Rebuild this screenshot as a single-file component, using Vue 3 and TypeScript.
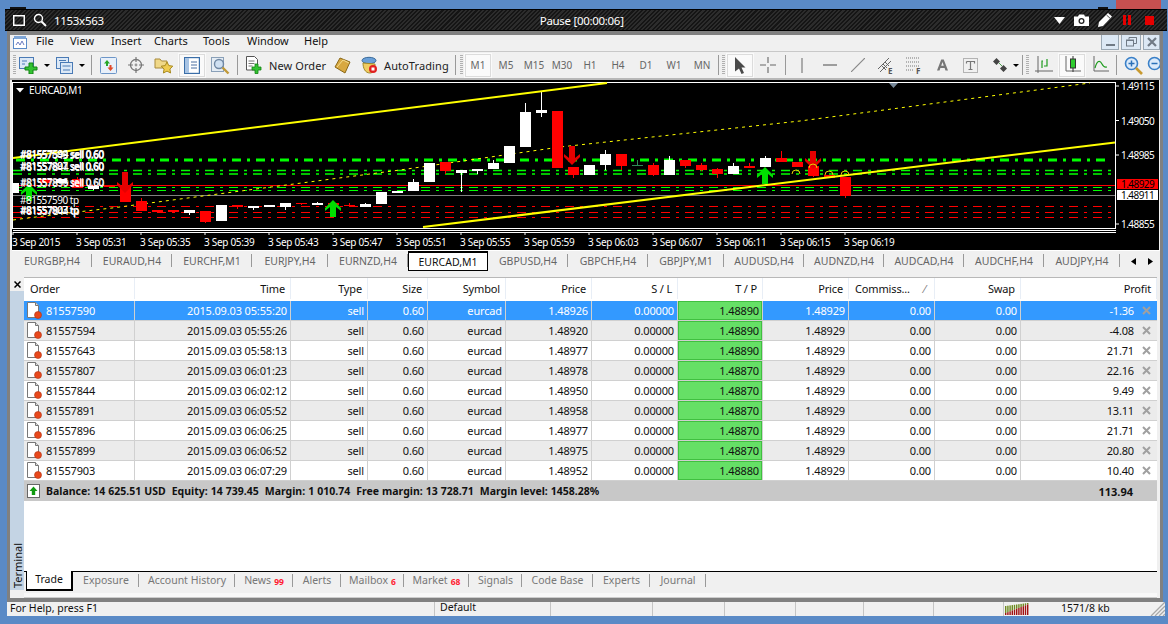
<script setup lang="ts">
interface Row { order: string; time: string; price: string; tp: string; profit: string }
const rows: Row[] = [
  { order: '81557590', time: '2015.09.03 05:55:20', price: '1.48926', tp: '1.48890', profit: '-1.36' },
  { order: '81557594', time: '2015.09.03 05:55:26', price: '1.48920', tp: '1.48890', profit: '-4.08' },
  { order: '81557643', time: '2015.09.03 05:58:13', price: '1.48977', tp: '1.48890', profit: '21.71' },
  { order: '81557807', time: '2015.09.03 06:01:23', price: '1.48978', tp: '1.48870', profit: '22.16' },
  { order: '81557844', time: '2015.09.03 06:02:12', price: '1.48950', tp: '1.48870', profit: '9.49' },
  { order: '81557891', time: '2015.09.03 06:05:52', price: '1.48958', tp: '1.48870', profit: '13.11' },
  { order: '81557896', time: '2015.09.03 06:06:25', price: '1.48977', tp: '1.48870', profit: '21.71' },
  { order: '81557899', time: '2015.09.03 06:06:52', price: '1.48975', tp: '1.48870', profit: '20.80' },
  { order: '81557903', time: '2015.09.03 06:07:29', price: '1.48952', tp: '1.48880', profit: '10.40' },
]
const headers = ['Order', 'Time', 'Type', 'Size', 'Symbol', 'Price', 'S / L', 'T / P', 'Price', 'Commiss...', 'Swap', 'Profit']
const chartTabs = [
  { t: 'EURGBP,H4', w: 80 }, { t: 'EURAUD,H4', w: 80 }, { t: 'EURCHF,M1', w: 80 }, { t: 'EURJPY,H4', w: 76 },
  { t: 'EURNZD,H4', w: 80 }, { t: 'EURCAD,M1', w: 80, active: true }, { t: 'GBPUSD,H4', w: 80 }, { t: 'GBPCHF,H4', w: 80 },
  { t: 'GBPJPY,M1', w: 76 }, { t: 'AUDUSD,H4', w: 80 }, { t: 'AUDNZD,H4', w: 80 }, { t: 'AUDCAD,H4', w: 80 },
  { t: 'AUDCHF,H4', w: 80 }, { t: 'AUDJPY,H4', w: 76 },
]
const termTabs = [
  { t: 'Exposure', w: 66 }, { t: 'Account History', w: 96 }, { t: 'News', n: '99', w: 58 }, { t: 'Alerts', w: 48 },
  { t: 'Mailbox', n: '6', w: 63 }, { t: 'Market', n: '68', w: 65 }, { t: 'Signals', w: 53 }, { t: 'Code Base', w: 71 },
  { t: 'Experts', w: 57 }, { t: 'Journal', w: 56 },
]
const menu = [
  { t: 'File', w: 34 }, { t: 'View', w: 41 }, { t: 'Insert', w: 43 }, { t: 'Charts', w: 49 },
  { t: 'Tools', w: 44 }, { t: 'Window', w: 57 }, { t: 'Help', w: 30 },
]
const periods = ['M1', 'M5', 'M15', 'M30', 'H1', 'H4', 'D1', 'W1', 'MN']
const statusCells = [102, 72, 71, 68, 70, 70]

const W = '#ffffff'
const R = '#ff0000'
// index, body top, body bottom, wick top, wick bottom, colour
const raw: [number, number, number, number, number, string][] = [
  [0, 183, 193, 183, 193, W], [2, 179, 183, 179, 183, R], [3, 179, 183, 179, 183, W], [4, 179, 188, 177, 188, R],
  [5, 186, 189, 186, 190, W], [6, 185, 187, 185, 187, R], [7, 186, 202, 186, 202, R], [8, 201, 211, 198, 211, R],
  [9, 210, 212, 210, 213, R], [10, 210, 212, 210, 213, R], [11, 210, 213, 210, 215, W], [12, 211, 222, 211, 223, R],
  [13, 205, 221, 205, 221, W], [14, 205, 207, 205, 209, R], [15, 206, 208, 206, 210, W], [16, 205, 207, 205, 207, W],
  [17, 203, 207, 203, 210, W], [18, 203, 204, 203, 205, R], [19, 203, 205, 202, 205, W], [20, 203, 205, 203, 205, R],
  [21, 205, 206, 203, 207, R], [22, 204, 207, 203, 207, W], [23, 192, 204, 192, 204, W], [24, 191, 193, 191, 193, W],
  [25, 182, 191, 179, 191, W], [26, 163, 182, 163, 182, W], [27, 162, 171, 162, 174, R], [28, 170, 173, 170, 192, W],
  [29, 169, 171, 169, 174, W], [30, 163, 169, 160, 169, W], [31, 146, 163, 146, 163, W], [32, 112, 147, 103, 147, W],
  [33, 110, 113, 92, 117, W], [34, 111, 168, 111, 168, R], [35, 167, 175, 167, 178, R], [36, 165, 175, 165, 175, W],
  [37, 154, 165, 150, 170, W], [38, 154, 166, 154, 170, R], [39, 165, 166, 160, 166, '#2e8b57'], [40, 165, 175, 163, 176, R],
  [41, 160, 175, 156, 175, W], [42, 160, 166, 160, 168, R], [43, 165, 170, 163, 171, R], [44, 169, 174, 168, 178, R],
  [45, 166, 174, 163, 174, W], [46, 166, 168, 163, 168, R], [47, 158, 167, 156, 167, W], [48, 158, 162, 151, 162, R],
  [49, 162, 167, 162, 167, R], [50, 166, 176, 151, 177, R], [51, 175, 178, 175, 178, R], [52, 177, 196, 177, 198, R],
]
const candles = raw.map(([i, top, bot, wt, wb, c]) => {
  const x = 13.5 + 16 * i
  const x1 = Math.max(13, x - 5.5)
  return { x, x1, w: x + 5.5 - x1, top, h: bot - top, wt, wb, c }
})
const arrowPts = (cx: number, y: number, h: number, up: boolean): string => {
  const p: [number, number][] = [[0, 0], [8, 8], [8, 11], [3, 7], [3, h], [-3, h], [-3, 7], [-8, 11], [-8, 8]]
  return p.map(([dx, dy]) => `${cx + dx},${up ? y + dy : y + h - dy}`).join(' ')
}
const upArrows = [{ x: 29, y: 184 }, { x: 333, y: 200 }, { x: 765, y: 167 }].map(a => arrowPts(a.x, a.y, 17, true))
const downArrows = [{ x: 125, y: 172, h: 21 }, { x: 572, y: 146, h: 19 }, { x: 813, y: 151, h: 18 }].map(a => arrowPts(a.x, a.y, a.h, false))
const stops = [{ x: 796, y: 170 }, { x: 813, y: 164 }, { x: 829, y: 171 }, { x: 845, y: 171 }]
const thin = [170.5, 174, 187.5, 190.5]
const redLines = [206.5, 212.5, 217.5]
const ticks = Array.from({ length: 14 }, (_, k) => 13 + 64 * k)
const timeLabels = ['3 Sep 2015', '3 Sep 05:31', '3 Sep 05:35', '3 Sep 05:39', '3 Sep 05:43', '3 Sep 05:47', '3 Sep 05:51', '3 Sep 05:55', '3 Sep 05:59', '3 Sep 06:03', '3 Sep 06:07', '3 Sep 06:11', '3 Sep 06:15', '3 Sep 06:19']
const prices = [{ t: '1.49115', y: 90 }, { t: '1.49050', y: 124.5 }, { t: '1.48985', y: 159 }, { t: '1.48855', y: 228 }]
const orderLabels = [
  { t: '#81557590 sell 0.60', x: 20, y: 158 }, { t: '#81557594 sell 0.60', x: 20.6, y: 157.5 }, { t: '#81557643 sell 0.60', x: 20, y: 159 },
  { t: '#81557807 sell 0.60', x: 20, y: 170 }, { t: '#81557844 sell 0.60', x: 20.6, y: 171 }, { t: '#81557891 sell 0.60', x: 20, y: 169.5 },
  { t: '#81557896 sell 0.60', x: 20, y: 186 }, { t: '#81557899 sell 0.60', x: 20.5, y: 187 },
  { t: '#81557590 tp', x: 20, y: 204 }, { t: '#81557807 tp', x: 20, y: 214 }, { t: '#81557844 tp', x: 20.6, y: 215 }, { t: '#81557903 tp', x: 20, y: 213.5 },
]
const meter = Array.from({ length: 11 }, (_, k) => ({ x: k * 2.2, top: 1 + (10 - k) * 0.3, mid: 11 - k * 0.85 }))
</script>

<template>
  <div class="page">
    <div class="topstrip">
      <i class="nub nub-l"></i>
      <i class="nub nub-r"></i>
      <i class="closebtn"></i>
    </div>

    <div class="rec">
      <svg class="rec-win" width="12" height="11" viewBox="0 0 12 11"><rect x="0.75" y="0.75" width="10.5" height="9.5" fill="none" stroke="#fff" stroke-width="1.5" /></svg>
      <svg class="rec-mag" width="14" height="14" viewBox="0 0 14 14"><circle cx="5.5" cy="5.5" r="4" fill="none" stroke="#fff" stroke-width="1.4" /><path d="M8.5 8.5l4.5 4.5" stroke="#fff" stroke-width="2" /></svg>
      <span class="rec-size">1153x563</span>
      <span class="rec-title">Pause [00:00:06]</span>
      <div class="rec-tools">
        <svg width="11" height="7" viewBox="0 0 11 7"><path d="M0 0h11L5.5 7z" fill="#fff" /></svg>
        <svg width="15" height="12" viewBox="0 0 15 12"><path d="M0 2.5h4L5 .5h5l1 2h4V12H0z" fill="#fff" /><circle cx="7.5" cy="7" r="3" fill="#222" /><circle cx="7.5" cy="7" r="1.7" fill="#fff" /></svg>
        <svg width="14" height="14" viewBox="0 0 14 14"><path d="M10 0l4 3.5L5 13l-5 1 1-5z" fill="#fff" /><path d="M8.5 2l3.5 3.2" stroke="#222" stroke-width=".8" /></svg>
        <svg class="t-pause" width="8" height="10" viewBox="0 0 8 10"><path d="M0 0h3v10H0zM5 0h3v10H5z" fill="#e60000" /></svg>
        <svg class="t-stop" width="9" height="9" viewBox="0 0 9 9"><rect width="9" height="9" fill="#e60000" /></svg>
      </div>
    </div>

    <div class="frame">
      <div class="menubar">
        <svg class="appicon" width="15" height="14" viewBox="0 0 15 14"><rect x=".5" y="2.5" width="13" height="10" fill="#fff" stroke="#5a8ac6" /><rect x="1" y="0" width="12" height="3" fill="#7fa6d6" /><path d="M3 9l2-3 2 3 2-4 2 4" fill="none" stroke="#6a7bc0" /></svg>
        <span v-for="m in menu" :key="m.t" class="menuitem" :style="{ width: m.w + 'px' }">{{ m.t }}</span>
        <div class="winbtns">
          <span class="wb wb1"><svg width="9" height="9" viewBox="0 0 9 9"><rect y="6" width="9" height="2" fill="#707a85" /></svg></span>
          <span class="wb wb2"><svg width="11" height="10" viewBox="0 0 11 10"><path d="M3 2.5V.5h7.5v6H8" fill="none" stroke="#707a85" /><rect x=".5" y="3" width="7" height="6" fill="none" stroke="#707a85" /><path d="M3 .5h7.5M.5 3.5h7" stroke="#707a85" /></svg></span>
          <span class="wb wb3"><svg width="10" height="10" viewBox="0 0 10 10"><path d="M1 1l8 8M9 1l-8 8" stroke="#707a85" stroke-width="2.2" /></svg></span>
        </div>
      </div>

      <div class="toolbar">
        <i class="grip g-first"></i>
        <div class="tb dd1">
          <svg width="20" height="17" viewBox="0 0 20 17"><rect x=".5" y=".5" width="14" height="11" fill="#dbe8f6" stroke="#4a7ab5" /><path d="M3 4h5M3 7h3" stroke="#4a7ab5" /><path d="M10 6h4v4h4v3h-4v4h-4v-4H6v-3h4z" fill="#32c232" stroke="#128412" /></svg>
          <i class="caret"></i>
        </div>
        <div class="tb dd2">
          <svg width="17" height="17" viewBox="0 0 17 17"><rect x=".5" y=".5" width="12" height="11" fill="#dbe8f6" stroke="#4a7ab5" /><rect x="4.5" y="5.5" width="12" height="11" fill="#dbe8f6" stroke="#4a7ab5" /><path d="M6.5 9h8M7 13h7M3 3.5h7" stroke="#4a7ab5" /></svg>
          <i class="caret"></i>
        </div>
        <i class="sep s6"></i>
        <div class="tb b28"><svg width="17" height="17" viewBox="0 0 17 17"><rect x=".5" y=".5" width="16" height="16" rx="1" fill="#e8f0fa" stroke="#6d96c8" /><path d="M7 3l3 3.5H8V9H6V6.5H4z" fill="#26a626" /><path d="M10.5 14l-3-3.5h2V8h2v2.5h2z" fill="#e04a2a" /></svg></div>
        <div class="tb b28"><svg width="18" height="18" viewBox="0 0 18 18"><circle cx="9" cy="9" r="5.5" fill="none" stroke="#777" stroke-width="1.3" /><circle cx="9" cy="9" r="1.4" fill="#999" /><path d="M9 1v5M9 12v5M1 9h5M12 9h5" stroke="#777" stroke-width="1.2" /></svg></div>
        <div class="tb b28"><svg width="20" height="18" viewBox="0 0 20 18"><path d="M1 3h5l1.5 2H13v7H1z" fill="#f0d888" stroke="#a88a3a" /><path d="M13 6l1.8 3.6 4 .6-2.9 2.8.7 4-3.6-1.9-3.6 1.9.7-4-2.9-2.8 4-.6z" fill="#f0cc50" stroke="#a88a20" /></svg></div>
        <div class="tb b28 on"><svg width="16" height="17" viewBox="0 0 16 17"><rect x=".5" y=".5" width="15" height="16" fill="#fff" stroke="#3a6ea8" stroke-width="1.4" /><rect x="1" y="1" width="4" height="15" fill="#a8c4e4" /><path d="M7 5h6M7 8h6M7 11h6" stroke="#4a6ea0" /></svg></div>
        <div class="tb b28"><svg width="19" height="19" viewBox="0 0 19 19"><rect x=".5" y="1.5" width="12" height="14" fill="#e4ecf4" stroke="#8aa0b8" /><circle cx="8" cy="8" r="4.5" fill="#cfe0f2" stroke="#7088a4" stroke-width="1.4" /><path d="M11.5 11.5l6 6" stroke="#c09a3a" stroke-width="2.4" /></svg></div>
        <i class="sep s6"></i>
        <div class="tb txt orderbtn">
          <svg width="17" height="18" viewBox="0 0 17 18"><path d="M.5.5h8l3 3V14H.5z" fill="#fff" stroke="#555" /><path d="M2.5 5h6M2.5 7.5h6M2.5 10h4" stroke="#777" /><path d="M9 8h3v3h3v3h-3v3.500H9V14H6v-3h3z" fill="#32c232" stroke="#128412" stroke-width=".8" /></svg>
          <span>New Order</span>
        </div>
        <div class="tb b28"><svg width="17" height="17" viewBox="0 0 17 17"><path d="M6 1l10 4-5 11L1 10z" fill="#d8a840" stroke="#8a6818" /><path d="M3 10l6-7 6 3" fill="none" stroke="#f4dc90" /></svg></div>
        <div class="tb txt autobtn">
          <svg width="17" height="18" viewBox="0 0 17 18"><ellipse cx="8" cy="4.500" rx="7" ry="3.200" fill="#6aa0d8" stroke="#3a6a9a" /><path d="M2 7c0 5 2 10 7 10 3 0 5-3 5-9z" fill="#f0cc60" stroke="#a08828" /><circle cx="12" cy="13" r="4" fill="#e02020" /><rect x="10.500" y="11.500" width="3" height="3" fill="#fff" /></svg>
          <span>AutoTrading</span>
        </div>
        <i class="sep s6"></i>
        <i class="grip g8"></i>
        <div v-for="(p, i) in periods" :key="p" class="tb b28 period" :class="{ on: i === 0 }">{{ p }}</div>
        <i class="sep s4"></i>
        <i class="grip g6"></i>
        <div class="tb b28 on"><svg width="11" height="17" viewBox="0 0 11 17"><path d="M0 0l10.500 10.500H6.500l2.500 5.500-2.500 1-2.500-5.500L0 14.500z" fill="#4a4a4a" /></svg></div>
        <div class="tb b28"><svg width="16" height="16" viewBox="0 0 16 16"><path d="M8 0v6M8 10v6M0 8h6M10 8h6" stroke="#666" stroke-width="1.100" /></svg></div>
        <i class="sep s6"></i>
        <div class="tb b28"><svg width="2" height="15" viewBox="0 0 2 15"><path d="M1 0v15" stroke="#666" stroke-width="1" /></svg></div>
        <div class="tb b28"><svg width="14" height="2" viewBox="0 0 14 2"><path d="M0 1h14" stroke="#666" stroke-width="1.200" /></svg></div>
        <div class="tb b28"><svg width="14" height="14" viewBox="0 0 14 14"><path d="M0 14L14 0" stroke="#888" stroke-width="1.200" /></svg></div>
        <div class="tb b28"><svg width="17" height="17" viewBox="0 0 17 17"><path d="M0 12L11 1M2 15L13 4M5 7l4 4M7 5l4 4M4 9l4 4" stroke="#666" fill="none" /><text x="10" y="16.500" class="mini">E</text></svg></div>
        <div class="tb b28"><svg width="17" height="17" viewBox="0 0 17 17"><path d="M0 1h14M0 5h14M0 9h14M0 13h8" stroke="#777" stroke-dasharray="1 1" /><text x="10" y="16.500" class="mini">F</text></svg></div>
        <div class="tb b28"><svg width="11" height="12" viewBox="0 0 13 13"><path d="M5 0h3l5 13h-3l-1-3H4l-1 3H0zM6.500 3L5 7.500h3z" fill="#777" fill-rule="evenodd" /></svg></div>
        <div class="tb b28"><svg width="15" height="15" viewBox="0 0 15 15"><rect x=".5" y=".5" width="14" height="14" fill="none" stroke="#777" stroke-dasharray="1 1" /><path d="M3.500 3.500h8v2M7.500 3.500v8M5.500 11.500h4M3.500 3.500v2" fill="none" stroke="#777" stroke-width="1.200" /></svg></div>
        <div class="tb dd3">
          <svg width="15" height="14" viewBox="0 0 15 14"><path d="M0 3.500l3.500-3.500 3.500 3.500-3.500 3.500zM7 10.500L10.500 7l3.500 3.500L10.500 14z" fill="#444" /><path d="M6 5l3 3" stroke="#4aa04a" /></svg>
          <i class="caret"></i>
        </div>
        <i class="sep s4"></i>
        <i class="grip g6"></i>
        <div class="tb b28"><svg width="18" height="18" viewBox="0 0 18 18"><path d="M3 0v15h15" fill="none" stroke="#666" /><path d="M0 15h3M3 17v-2" stroke="#666" /><path d="M7 12V5h1M12 3v7h-2M9 10h3" fill="none" stroke="#1f9c1f" stroke-width="1.200" /></svg></div>
        <div class="tb b28 on"><svg width="18" height="20" viewBox="0 0 18 20"><path d="M3 1v15h15" fill="none" stroke="#666" /><path d="M10 1v16" stroke="#333" /><rect x="7.500" y="4" width="5" height="9" fill="#2ecc2e" stroke="#333" /></svg></div>
        <div class="tb b28"><svg width="18" height="18" viewBox="0 0 18 18"><path d="M3 0v15h15" fill="none" stroke="#666" /><path d="M4 12c2-8 5-8 7-4s3 3 5 3" fill="none" stroke="#1f9c1f" stroke-width="1.200" /></svg></div>
        <i class="sep s5"></i>
        <div class="tb b28"><svg width="19" height="19" viewBox="0 0 19 19"><circle cx="7.500" cy="7.500" r="6" fill="#dbeafa" stroke="#3a80c8" stroke-width="1.600" /><path d="M4.500 7.500h6M7.500 4.500v6" stroke="#2a70b8" stroke-width="1.500" /><path d="M12 12l6 6" stroke="#c89a30" stroke-width="2.600" /></svg></div>
        <div class="tb b14"><svg width="14" height="19" viewBox="0 0 14 19"><circle cx="7.500" cy="7.500" r="6" fill="#dbeafa" stroke="#3a80c8" stroke-width="1.600" /><path d="M4.500 7.500h6" stroke="#2a70b8" stroke-width="1.500" /></svg></div>
      </div>

      <div class="chart">
        <svg class="chartsvg" width="1147" height="170" viewBox="12 80 1147 170">
          <rect x="12" y="80" width="1147" height="170" fill="#000" />
          <rect x="12.500" y="82.500" width="1103" height="146" fill="none" stroke="#fff" />
          <path d="M13 230.500H1116M13 232.500H1116" stroke="#fff" />
          <path d="M889 83h9l-4.500 5z" fill="#778899" />
          <path d="M16 88h8l-4 4.500z" fill="#fff" />
          <text x="29" y="94" class="ct">EURCAD,M1</text>

          <path d="M13 160H1111" stroke="#00ff00" stroke-width="3" stroke-dasharray="9 6 3 6" stroke-dashoffset="-3" fill="none" />
          <path v-for="y in thin" :key="y" :d="`M13 ${y}H1111`" stroke="#00ff00" stroke-dasharray="9 6 3 6" fill="none" :stroke-width="y < 180 ? 1.500 : 1" />
          <path d="M13 185.500H1115" stroke="#ff0000" fill="none" />
          <path d="M13 195.500H1115" stroke="#808080" fill="none" />
          <path v-for="y in redLines" :key="y" :d="`M13 ${y}H1111`" stroke="#ff0000" stroke-dasharray="9 6 3 6" fill="none" />

          <path d="M13 220L20 219L60 214L112 208L400 170L560 147L800 121L1090 83" fill="none" stroke="#ffff00" stroke-dasharray="3 4" />

          <g v-for="(c, i) in candles" :key="i">
            <path :d="`M${c.x} ${c.wt}V${c.wb}`" :stroke="c.c" fill="none" />
            <rect :x="c.x1" :y="c.top" :width="c.w" :height="c.h" :fill="c.c" />
          </g>

          <path d="M13 158L607 83" fill="none" stroke="#ffff00" stroke-width="2" />
          <path d="M423 227L1115 142.500" fill="none" stroke="#ffff00" stroke-width="2" />

          <polygon v-for="(p, i) in upArrows" :key="'u' + i" :points="p" fill="#00e000" />
          <polygon v-for="(p, i) in downArrows" :key="'d' + i" :points="p" fill="#e60000" />
          <path v-for="(s, i) in stops" :key="'s' + i" :d="`M${s.x - 4} ${s.y + 4}a4 4 0 1 1 8 0`" fill="none" stroke="#e6d000" />

          <text v-for="(l, i) in orderLabels" :key="'l' + i" :x="l.x" :y="l.y" class="lab">{{ l.t }}</text>

          <path v-for="t in ticks" :key="t" :d="`M${t} 232V235`" stroke="#fff" />
          <text v-for="(t, i) in timeLabels" :key="t" :x="12 + 64 * i" y="246" class="ct">{{ t }}</text>

          <path d="M1115.500 82V229" stroke="#fff" />
          <path d="M1116 86h3M1116 120.500h3M1116 155h3M1116 224h3" stroke="#fff" />
          <text v-for="p in prices" :key="p.t" x="1121" :y="p.y" class="ct px">{{ p.t }}</text>
          <rect x="1117" y="179" width="41" height="10" fill="#ff0000" />
          <text x="1121" y="188" class="ct px dark">1.48929</text>
          <rect x="1117" y="190" width="41" height="10" fill="#fff" />
          <text x="1121" y="199" class="ct px dark">1.48911</text>
        </svg>
      </div>

      <div class="charttabs">
        <div v-for="t in chartTabs" :key="t.t" class="ctab" :class="{ active: t.active }" :style="{ width: t.w + 'px' }">{{ t.t }}</div>
        <div class="tabarrows">
          <svg width="5" height="7" viewBox="0 0 5 7"><path d="M5 0v7L0 3.500z" fill="#000" /></svg>
          <svg width="5" height="7" viewBox="0 0 5 7"><path d="M0 0v7l5-3.500z" fill="#000" /></svg>
        </div>
      </div>

      <div class="terminal">
        <div class="strip">
          <div class="stripx"><svg width="7" height="7" viewBox="0 0 7 7"><path d="M.5.500l6 6M6.500.500l-6 6" stroke="#000" stroke-width="1.500" /></svg></div>
          <div class="stripbody"><span>Terminal</span></div>
        </div>
        <div class="termmain">
          <div class="grid">
            <div class="tr head">
              <div v-for="(h, i) in headers" :key="i" class="td" :class="{ left: i === 0 || i === 9 }">
                {{ h }}<span v-if="i === 9" class="sort">⁄</span>
              </div>
            </div>
            <div v-for="(r, i) in rows" :key="r.order" class="tr" :class="{ sel: i === 0, alt: i % 2 === 1 }">
              <div class="td left ordercell">
                <svg width="16" height="17" viewBox="0 0 16 17"><path d="M1.500.500h8l3 3V15.500h-11z" fill="#fff" stroke="#777" /><path d="M9.500.500v3h3" fill="#ddd" stroke="#777" /><circle cx="12" cy="13" r="3.500" fill="#e8481c" stroke="#b03010" stroke-width=".6" /></svg>
                <span>{{ r.order }}</span>
              </div>
              <div class="td">{{ r.time }}</div>
              <div class="td">sell</div>
              <div class="td">0.60</div>
              <div class="td">eurcad</div>
              <div class="td">{{ r.price }}</div>
              <div class="td">0.00000</div>
              <div class="td tp">{{ r.tp }}</div>
              <div class="td">1.48929</div>
              <div class="td">0.00</div>
              <div class="td">0.00</div>
              <div class="td profit">
                <span>{{ r.profit }}</span>
                <svg width="9" height="9" viewBox="0 0 9 9"><path d="M1 1l7 7M8 1l-7 7" stroke="#a0a0a0" stroke-width="2" /></svg>
              </div>
            </div>
            <div class="balance">
              <svg width="14" height="15" viewBox="0 0 14 15"><rect x=".5" y=".5" width="12" height="13" fill="#fff" stroke="#666" /><path d="M6.500 2.500l4 4.500H8.200v4H4.800V7H2.500z" fill="#109a10" /></svg>
              <span class="baltext">Balance: 14 625.51 USD&nbsp; Equity: 14 739.45&nbsp; Margin: 1 010.74&nbsp; Free margin: 13 728.71&nbsp; Margin level: 1458.28%</span>
              <span class="baltotal">113.94</span>
            </div>
          </div>
          <div class="termtabs">
            <div class="ttab active">Trade</div>
            <div v-for="t in termTabs" :key="t.t" class="ttab" :style="{ width: t.w + 'px' }">
              {{ t.t }}<b v-if="t.n">{{ t.n }}</b>
            </div>
          </div>
        </div>
      </div>
    </div>

    <div class="status">
      <span class="st-help">For Help, press F1</span>
      <span class="st-cell st-default">Default</span>
      <span v-for="(w, i) in statusCells" :key="i" class="st-cell" :style="{ width: w + 'px' }"></span>
      <span class="st-cell st-meter">
        <svg width="24" height="13" viewBox="0 0 24 13">
          <g v-for="(m, i) in meter" :key="i">
            <rect :x="m.x" :y="m.top" width="1.400" :height="m.mid - m.top" fill="#6d8b1e" />
            <rect :x="m.x" :y="m.mid" width="1.400" :height="13 - m.mid" fill="#a01010" />
          </g>
        </svg>
      </span>
      <span class="st-kb">1571/8 kb</span>
      <svg class="st-grip" width="16" height="14" viewBox="0 0 16 14"><path d="M2 14L16 0M6 14L16 4M10 14l6-6M14 14l2-2" stroke="#a8a8a8" stroke-width="1.300" /></svg>
    </div>
  </div>
</template>

<style>
html, body { margin: 0; padding: 0; }
</style>

<style scoped>
.page { width: 1168px; height: 624px; overflow: hidden; background: #5a8ac6; display: flex; flex-direction: column; font: 11px "Noto Sans", Tahoma, sans-serif; color: #111; }
.topstrip { height: 9px; display: flex; align-items: flex-end; flex: none; }
.nub { display: block; height: 2px; background: #111; }
.nub-l { width: 16px; margin-left: 10px; }
.nub-r { width: 10px; margin-left: 1072px; }
.closebtn { display: block; width: 45px; height: 9px; margin-left: 8px; background: #c75050; }
.rec { flex: none; height: 22px; margin: 0 1px 0 5px; background: repeating-linear-gradient(135deg, #151515 0, #151515 1.500px, #2c2c2c 1.500px, #2c2c2c 3px); border: 1px solid #000; border-width: 1px 0; box-sizing: border-box; display: flex; align-items: center; color: #fff; font-size: 11.500px; letter-spacing: -.3px; }
.rec-win { margin-left: 8px; }
.rec-mag { margin-left: 8px; }
.rec-size { margin-left: 7px; }
.rec-title { margin-left: 436px; }
.rec-tools { margin-left: auto; display: flex; align-items: center; gap: 9px; padding-right: 13px; }
.t-pause { margin-left: 2px; }
.t-stop { margin-left: 5px; }

.frame { flex: none; width: 1156px; height: 571px; margin-left: 7px; border: 3px solid #808080; border-top-width: 4px; border-bottom-width: 4px; box-sizing: border-box; background: #f0f0f0; display: flex; flex-direction: column; overflow: hidden; }
.menubar { flex: none; height: 17px; display: flex; align-items: center; border-bottom: 1px solid #c8c8c8; box-sizing: border-box; padding-left: 3px; }
.appicon { margin-right: 8px; }
.menuitem { flex: none; line-height: 14px; margin-bottom: 5px; }
.winbtns { margin-left: auto; display: flex; gap: 2px; align-self: flex-start; }
.wb { box-sizing: border-box; height: 15px; background: #dce8f4; border: 1px solid #9aa8b4; border-top: 0; display: flex; align-items: center; justify-content: center; }
.wb1 { width: 18px; } .wb2 { width: 20px; } .wb3 { width: 17px; }

.toolbar { flex: none; height: 26px; display: flex; align-items: center; border-bottom: 2px solid #b8b8b8; overflow: hidden; }
.tb { flex: none; height: 25px; display: flex; align-items: center; justify-content: center; box-sizing: border-box; }
.b28 { width: 28px; }
.b14 { width: 14px; justify-content: flex-start; }
.on { background: #fafafa; outline: 1px solid #dcdcdc; outline-offset: -2px; }
.dd1 { width: 37px; justify-content: flex-start; padding-left: 1px; gap: 5px; }
.dd2 { width: 33px; justify-content: flex-start; padding-left: 1px; gap: 6px; }
.dd3 { width: 36px; justify-content: flex-start; padding-left: 9px; gap: 5px; }
.caret { display: block; width: 0; height: 0; border: 3px solid transparent; border-top: 3px solid #000; border-bottom: 0; }
.sep { flex: none; display: block; height: 20px; background: linear-gradient(#999, #999) center / 1px 100% no-repeat; }
.s4 { width: 4px; } .s5 { width: 5px; } .s6 { width: 6px; }
.grip { flex: none; display: block; height: 20px; background: repeating-linear-gradient(#b0b0b0 0, #b0b0b0 1px, transparent 1px, transparent 2px) center / 3px 100% no-repeat; }
.g-first { width: 8px; }
.g8 { width: 6px; } .g6 { width: 6px; }
.txt { justify-content: flex-start; gap: 6px; font-size: 11px; letter-spacing: .1px; color: #222; }
.orderbtn { width: 88px; padding-left: 6px; }
.autobtn { width: 96px; padding-left: 5px; }
.period { color: #666; font-size: 10px; }
.mini { font: bold 8px "Noto Sans", sans-serif; fill: #555; }

.chart { flex: none; height: 170px; margin-left: 2px; border-bottom: 1px solid #fff; }
.chartsvg { display: block; }
.ct { font: 10px "Noto Sans", sans-serif; fill: #fff; letter-spacing: -.3px; }
.px { letter-spacing: -.55px; }
.dark { fill: #000; }
.lab { font: 10px "Noto Sans", sans-serif; fill: #fff; letter-spacing: -.5px; }

.charttabs { flex: none; height: 20px; margin-left: 2px; display: flex; align-items: stretch; }
.ctab { flex: none; box-sizing: border-box; display: flex; align-items: center; justify-content: center; font-size: 10.500px; color: #666; background: linear-gradient(#999, #999) right 3px / 1px 13px no-repeat; }
.ctab.active { background: #fff; color: #111; border: 1px solid #000; border-top: 2px solid #000; }
.tabarrows { flex: 1; display: flex; align-items: center; justify-content: flex-start; gap: 12px; padding-left: 11px; }

.terminal { flex: 1; min-height: 0; display: flex; padding-top: 6px; }
.strip { flex: none; width: 14px; display: flex; flex-direction: column; margin-bottom: 8px; }
.stripx { flex: none; height: 14px; display: flex; align-items: center; justify-content: center; }
.stripbody { flex: 1; background: #c4d4e4; display: flex; align-items: flex-end; justify-content: center; padding-bottom: 2px; }
.stripbody span { writing-mode: vertical-rl; transform: rotate(180deg); line-height: 13px; font-size: 11px; color: #111; }
.termmain { flex: 1; min-width: 0; display: flex; flex-direction: column; margin-right: 3px; }
.grid { flex: 1; background: #fff; }
.tr { display: grid; grid-template-columns: 111px 156px 77px 60px 78px 86px 86px 85px 86px 86px 86px 136px; height: 20px; border-bottom: 1px solid #d0d0d0; box-sizing: border-box; color: #111; }
.tr.head { height: 24px; border-bottom: 0; border-top: 1px solid #b8b8b8; background: #fff; padding-bottom: 2px; }
.head .td { border-right: 1px solid #e8eef6; padding-right: 5px; }
.td { display: flex; align-items: center; justify-content: flex-end; box-sizing: border-box; border-right: 1px solid #d0d0d0; padding-right: 3px; white-space: nowrap; min-width: 0; letter-spacing: -.15px; }
.td.left { justify-content: flex-start; padding-left: 6px; }
.td.ordercell { padding-left: 2px; gap: 4px; }
.sort { color: #777; margin-left: 14px; }
.tr.alt { background: #ebebeb; }
.tr.sel { background: #3399ff; color: #fff; }
.tp { background: #66e066; color: #111; box-shadow: inset 0 0 0 1px #40c040; }
.tr.sel .tp { color: #111; }
.td.profit { border-right: 0; padding-right: 6px; gap: 8px; }
.balance { height: 20px; background: #c8c8c8; display: flex; align-items: center; box-sizing: border-box; padding-left: 3px; font-weight: 700; color: #111; }
.baltext { margin-left: 5px; font-size: 10.500px; word-spacing: .3px; }
.baltotal { margin-left: auto; margin-right: 24px; }

.termtabs { flex: none; height: 27px; box-sizing: border-box; display: flex; border-bottom: 1px solid #ccc; box-shadow: inset 0 -4px 0 #f8f8f8; align-items: flex-start; background: linear-gradient(#000, #000) 0 0 / 100% 1px no-repeat; }
.ttab { flex: none; height: 20px; padding-bottom: 2px; display: flex; align-items: center; justify-content: center; box-sizing: border-box; color: #777; font-size: 10.500px; background: linear-gradient(#999, #999) right 3px / 1px 13px no-repeat; }
.ttab b { color: #ff2030; font-size: 8.500px; margin-left: 3px; margin-top: 3px; }
.ttab.active { width: 47px; margin-left: 2px; color: #111; background: #fff; border: 1px solid #000; border-top: 0; border-bottom-width: 2px; border-right-width: 2px; }

.status { flex: none; height: 14px; margin: 0 3px 0 7px; background: #f0f0f0; display: flex; align-items: center; position: relative; font-size: 10.500px; }
.st-help { flex: none; width: 427px; padding-left: 3px; box-sizing: border-box; margin-bottom: 3px; }
.st-cell { flex: none; height: 14px; box-sizing: border-box; border-left: 1px solid #c4c4c4; }
.st-default { width: 116px; padding-left: 5px; line-height: 11px; }
.st-meter { width: 58px; padding-left: 1px; }
.st-kb { flex: none; margin-left: 0; margin-bottom: 3px; white-space: nowrap; }
.st-grip { position: absolute; right: 0; bottom: 0; }
</style>
